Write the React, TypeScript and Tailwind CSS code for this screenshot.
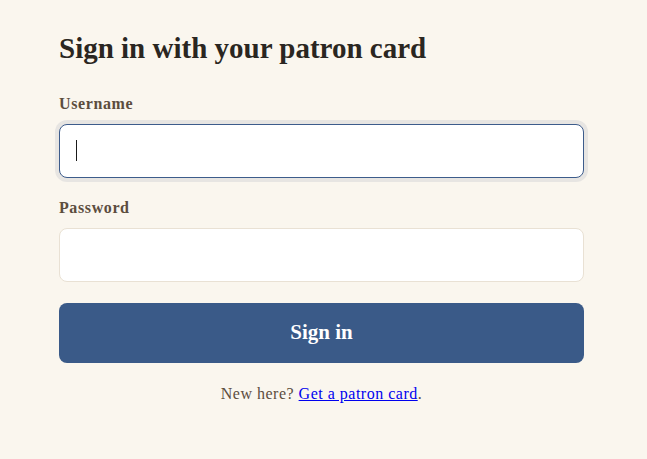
import { useState } from "react";

export default function App() {
  const [user, setUser] = useState("");
  const [pass, setPass] = useState("");
  return (
    <div className="min-h-[459px] w-full bg-[#faf6ee] font-['Liberation_Serif',serif] text-[#2b2620]">
      <form
        className="ml-[59px] flex w-[525px] flex-col pt-[30px]"
        onSubmit={(e) => e.preventDefault()}
      >
        <h1 className="text-[29px] font-bold leading-[36px] text-[#2a2621]">
          Sign in with your patron card
        </h1>
        <label
          className="mt-[28px] text-[16px] font-bold leading-[20px] tracking-[0.6px] text-[#5c4d3e]"
          htmlFor="username"
        >
          Username
        </label>
        <div className="relative mt-[10px]">
          <input
            id="username"
            value={user}
            onChange={(e) => setUser(e.target.value)}
            className="h-[54px] w-full rounded-[8px] border-[1.5px] border-[#3d5c8b] bg-white px-[16px] text-[18px] outline-none ring-4 ring-[#e7e5e2]"
          />
          {user === "" && (
            <span className="pointer-events-none absolute left-[17px] top-[16px] h-[21px] w-px bg-[#1a1a1a]" />
          )}
        </div>
        <label
          className="mt-[20px] text-[16px] font-bold leading-[20px] tracking-[0.6px] text-[#5c4d3e]"
          htmlFor="password"
        >
          Password
        </label>
        <input
          id="password"
          type="password"
          value={pass}
          onChange={(e) => setPass(e.target.value)}
          className="mt-[10px] h-[54px] w-full rounded-[8px] border border-[#e9e1d4] bg-white px-[16px] text-[18px] outline-none"
        />
        <button
          type="submit"
          className="mt-[21px] h-[60px] w-full rounded-[8px] bg-[#3a5a88] text-[21px] font-bold text-white"
        >
          Sign in
        </button>
        <p className="mt-[21px] text-center text-[16px] leading-[20px] tracking-[0.5px] text-[#5c4d3e]">
          New here?{" "}
          <a href="#" className="text-[#0000ee] underline">
            Get a patron card
          </a>
          .
        </p>
      </form>
    </div>
  );
}
